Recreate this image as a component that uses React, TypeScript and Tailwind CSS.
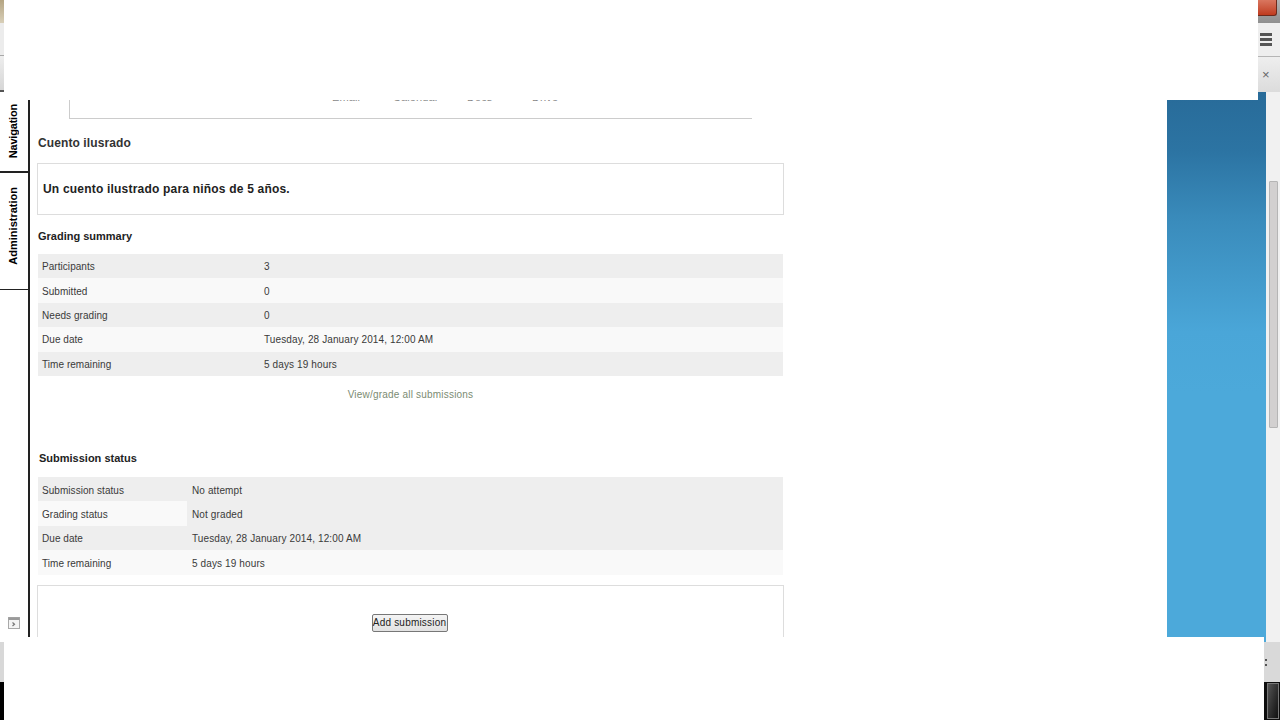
const font = { fontFamily: '"Liberation Sans", Arial, sans-serif' };

const summaryRows = [
  { label: "Participants", value: "3", bg: "bg-[#eeeeee]" },
  { label: "Submitted", value: "0", bg: "bg-[#f9f9f9]" },
  { label: "Needs grading", value: "0", bg: "bg-[#eeeeee]" },
  { label: "Due date", value: "Tuesday, 28 January 2014, 12:00 AM", bg: "bg-[#f9f9f9]" },
  { label: "Time remaining", value: "5 days 19 hours", bg: "bg-[#eeeeee]" },
];

const statusRows = [
  { label: "Submission status", value: "No attempt", labelBg: "bg-[#eeeeee]", valueBg: "bg-[#eeeeee]" },
  { label: "Grading status", value: "Not graded", labelBg: "bg-[#f9f9f9]", valueBg: "bg-[#eeeeee]" },
  { label: "Due date", value: "Tuesday, 28 January 2014, 12:00 AM", labelBg: "bg-[#eeeeee]", valueBg: "bg-[#eeeeee]" },
  { label: "Time remaining", value: "5 days 19 hours", labelBg: "bg-[#f9f9f9]", valueBg: "bg-[#f9f9f9]" },
];

function DockIcon() {
  return (
    <svg width="12" height="12" viewBox="0 0 12 12" className="block">
      <rect x="0.5" y="0.5" width="11" height="11" fill="#f4f4f4" stroke="#a9a9a9" />
      <rect x="0.5" y="0.5" width="11" height="2.5" fill="#9a9a9a" />
      <path d="M4.5 5.5l2 1.7-2 1.8" fill="none" stroke="#777" strokeWidth="1.2" />
    </svg>
  );
}

function TopChromeLeft() {
  return (
    <div className="flex h-full w-1 flex-col">
      <div className="h-[23px] bg-gradient-to-b from-[#b5a583] to-[#d8cfb8]" />
      <div className="h-[33px] border-b border-[#a8a8a8] bg-[#ececec]" />
      <div className="flex-1 border-b-2 border-[#555555] bg-gradient-to-b from-[#eeeeee] to-[#d6d6d6]" />
    </div>
  );
}

function TopChromeRight() {
  return (
    <div className="flex h-full w-[22px] flex-col">
      <div className="flex h-[23px] bg-gradient-to-b from-[#b3b3b3] to-[#8f8f8f]">
        <div className="h-[16px] w-[19px] rounded-br-[3px] border-b border-r border-[#6d2a1c] bg-gradient-to-b from-[#d9765f] to-[#bf3a1d]" />
      </div>
      <div className="flex h-[34px] items-center border-b border-[#b5b5b5] bg-[#eeeeee] pl-[2px]">
        <div className="flex w-[12px] flex-col gap-[2px]">
          <div className="h-[3px] bg-[#555555]" />
          <div className="h-[3px] bg-[#555555]" />
          <div className="h-[3px] bg-[#555555]" />
        </div>
      </div>
      <div className="flex flex-1 items-center bg-gradient-to-b from-[#eeeeee] to-[#dcdcdc] pl-[4px] text-[13px] leading-none text-[#666666]">
        ×
      </div>
    </div>
  );
}

function SideTabs() {
  return (
    <div className="flex w-[30px] shrink-0 flex-col border-r-2 border-[#222222]">
      <div className="flex h-[81px] items-center justify-center border-b-2 border-[#222222] pr-[2px]">
        <span className="rotate-180 text-[11px] leading-none font-bold tracking-[-0.2px] text-black [writing-mode:vertical-rl]">Navigation</span>
      </div>
      <div className="flex h-[117px] items-center justify-center border-b border-[#222222] pr-[2px] pb-[11px]">
        <span className="rotate-180 text-[11px] leading-none font-bold text-black [writing-mode:vertical-rl]">Administration</span>
      </div>
      <div className="mt-[327px] flex justify-center">
        <DockIcon />
      </div>
    </div>
  );
}

function InfoTable({ children }: { children: React.ReactNode }) {
  return <div className="ml-px w-[745px] text-[10px] text-[#3a3a3a]">{children}</div>;
}

export default function App() {
  return (
    <div className="relative flex h-[720px] w-[1280px] flex-col overflow-hidden bg-white" style={font}>
      {/* Browser window left over around the page */}
      <div className="flex h-[92px] shrink-0 justify-between">
        <TopChromeLeft />
        <TopChromeRight />
      </div>

      <div className="flex h-[550px] shrink-0 overflow-hidden">
        <SideTabs />

        <div className="w-[1137px] shrink-0 pl-[7px]">
          <div className="ml-[32px] flex h-[27px] w-[683px] border-b border-l border-[#cccccc] pl-[262px] text-[11px] leading-[10px] tracking-[0.1px] text-[#888888]">
            <span className="w-[61px]">Email</span>
            <span className="w-[74px]">Calendar</span>
            <span className="w-[65px]">Docs</span>
            <span>Drive</span>
          </div>

          <h2 className="mt-[14px] h-[20px] pl-px text-[12px] leading-[20px] font-bold tracking-[0.1px] text-[#333333]">Cuento ilusrado</h2>

          <div className="mt-[10px] flex h-[52px] w-[747px] items-center border border-[#dddddd] pl-[5px] text-[12px] font-bold tracking-[0.2px] text-[#222222]">
            Un cuento ilustrado para niños de 5 años.
          </div>

          <h3 className="mt-[13px] h-[16px] pl-px text-[11px] leading-[16px] font-bold text-[#222222]">Grading summary</h3>

          <div className="mt-[10px]">
            <InfoTable>
              {summaryRows.map((row) => (
                <div key={row.label} className={`flex h-[24.4px] items-center pt-[1px] ${row.bg}`}>
                  <span className="w-[226px] pl-[4px] tracking-[0.05px]">{row.label}</span>
                  <span className="tracking-[0.12px]">{row.value}</span>
                </div>
              ))}
            </InfoTable>
          </div>

          <div className="mt-[10px] ml-px h-[16px] w-[745px] text-center text-[10px] leading-[18px] tracking-[0.2px] text-[#7b8b72]">View/grade all submissions</div>

          <h3 className="mt-[48px] h-[16px] pl-[2px] text-[11px] leading-[16px] font-bold text-[#222222]">Submission status</h3>

          <div className="mt-[11px]">
            <InfoTable>
              {statusRows.map((row) => (
                <div key={row.label} className="flex h-[24.4px]">
                  <span className={`flex w-[149px] items-center pt-[2px] pl-[4px] tracking-[0.05px] ${row.labelBg}`}>{row.label}</span>
                  <span className={`flex flex-1 items-center pt-[2px] pl-[5px] tracking-[0.12px] ${row.valueBg}`}>{row.value}</span>
                </div>
              ))}
            </InfoTable>
          </div>

          <div className="mt-[10.4px] flex h-[80px] w-[747px] justify-center border border-[#dddddd] pt-[28px] pr-[2px]">
            <button className="h-[18px] w-[76px] rounded-[2px] border border-[#777777] bg-gradient-to-b from-[#f4f4f4] to-[#e2e2e2] text-[10px] leading-none tracking-[0.2px] whitespace-nowrap text-[#222222]">
              Add submission
            </button>
          </div>
        </div>

        <div className="w-[99px] shrink-0 bg-[linear-gradient(to_bottom,#286b99_0px,#2c74a3_60px,#3a8cbc_130px,#4aa6d8_240px,#4ca9da_300px,#4ca9da_100%)]" />

        <div className="flex-1 bg-[#f1f1f1] pt-[89px] pl-[3px]">
          <div className="h-[247px] w-[9px] rounded-[1px] border border-[#b5b5b5] bg-[#d2d0d0]" />
        </div>
      </div>

      <div className="flex flex-1 justify-between">
        <div className="flex w-1 flex-col">
          <div className="h-[40px] bg-[#d8d8d8]" />
          <div className="flex-1 bg-black" />
        </div>
        <div className="flex w-[16px] flex-col">
          <div className="flex h-[40px] flex-col justify-center gap-[3px] bg-[#d9d9d9] pl-px">
            <div className="h-[2px] w-[2px] bg-[#555555]" />
            <div className="h-[2px] w-[2px] bg-[#555555]" />
          </div>
          <div className="flex-1 bg-[#0d0d0d] pt-[1px] pl-[3px]">
            <div className="h-[36px] w-[12px] border border-[#777777] bg-gradient-to-br from-[#555555] to-[#111111]" />
          </div>
        </div>
      </div>

      {/* White boxes that cover the top and bottom of the capture */}
      <div className="absolute top-0 left-1 h-[100px] w-[1254px] bg-white" />
      <div className="absolute top-[637px] left-1 h-[83px] w-[1260px] bg-white" />
    </div>
  );
}
